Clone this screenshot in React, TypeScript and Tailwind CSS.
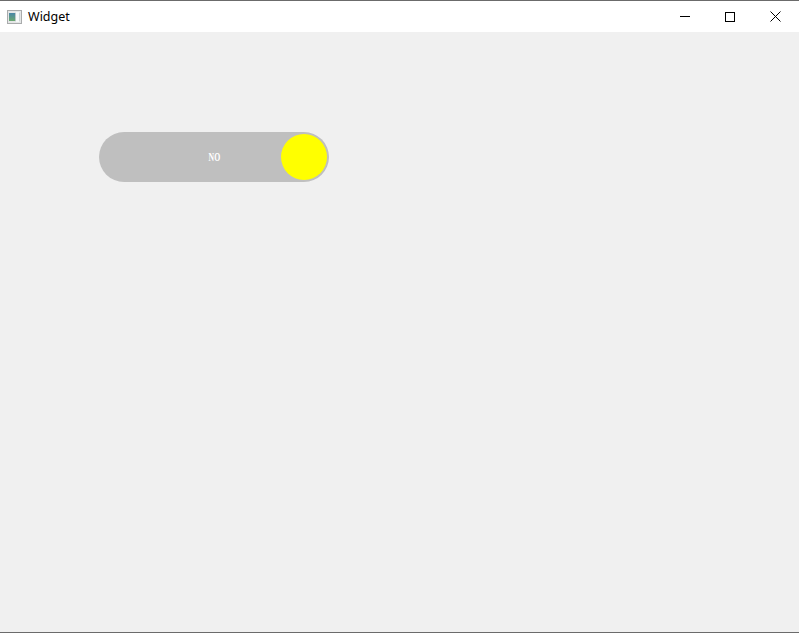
import React from 'react';

function AppIcon() {
  return (
    <svg width="15" height="14" viewBox="0 0 15 14" className="block">
      <rect x="0.5" y="0.5" width="14" height="13" fill="#e4e6e6" stroke="#a9abac" />
      <defs>
        <linearGradient id="pane" x1="0" y1="0" x2="0" y2="1">
          <stop offset="0" stopColor="#4a86a8" />
          <stop offset="1" stopColor="#6aa86e" />
        </linearGradient>
      </defs>
      <rect x="2" y="3" width="6" height="8" fill="url(#pane)" />
      <rect x="8" y="3" width="1" height="8" fill="#bcc6c8" />
      <rect x="9" y="2" width="3" height="10" fill="#f6f8f8" />
      <rect x="12" y="3" width="1" height="8" fill="#ccd4d6" />
    </svg>
  );
}

function WindowButtons() {
  return (
    <div className="flex items-center h-full pr-px">
      <button className="w-[45px] h-full flex items-center justify-center">
        <span className="block w-[10px] h-px bg-black" />
      </button>
      <button className="w-[45px] h-full flex items-center justify-center">
        <span className="block w-[10px] h-[10px] border border-black" />
      </button>
      <button className="w-[46px] h-full flex items-center justify-center">
        <svg width="11" height="11" viewBox="0 0 11 11" className="block">
          <path d="M0.5 0.5L10.5 10.5M10.5 0.5L0.5 10.5" stroke="#000" strokeWidth="1" fill="none" />
        </svg>
      </button>
    </div>
  );
}

export default function App() {
  return (
    <div className="w-[799px] h-[633px] flex flex-col bg-[#f0f0f0] overflow-hidden font-['Liberation_Sans',sans-serif]">
      {/* title bar */}
      <div className="h-[32px] shrink-0 bg-white border-t border-[#6b6b6b] flex items-center justify-between">
        <div className="flex items-center pl-[7px] gap-[6px]">
          <AppIcon />
          <span className="pt-[2px] text-[12.5px] leading-none text-black font-['Noto_Sans',sans-serif]">Widget</span>
        </div>
        <WindowButtons />
      </div>

      {/* body */}
      <div className="flex-1 pt-[100px] pl-[99px]">
        <div className="relative w-[230px] h-[50px] rounded-full bg-[#bfbfbf] flex items-center justify-center">
          <span className="inline-block scale-x-[0.62] text-[12.5px] leading-none font-semibold text-white font-['Liberation_Serif',serif]">NO</span>
          <div className="absolute left-[182px] top-[2px] w-[46px] h-[46px] rounded-full bg-[#ffff00]" />
        </div>
      </div>

      <div className="h-px shrink-0 bg-[#6b6b6b]" />
    </div>
  );
}
